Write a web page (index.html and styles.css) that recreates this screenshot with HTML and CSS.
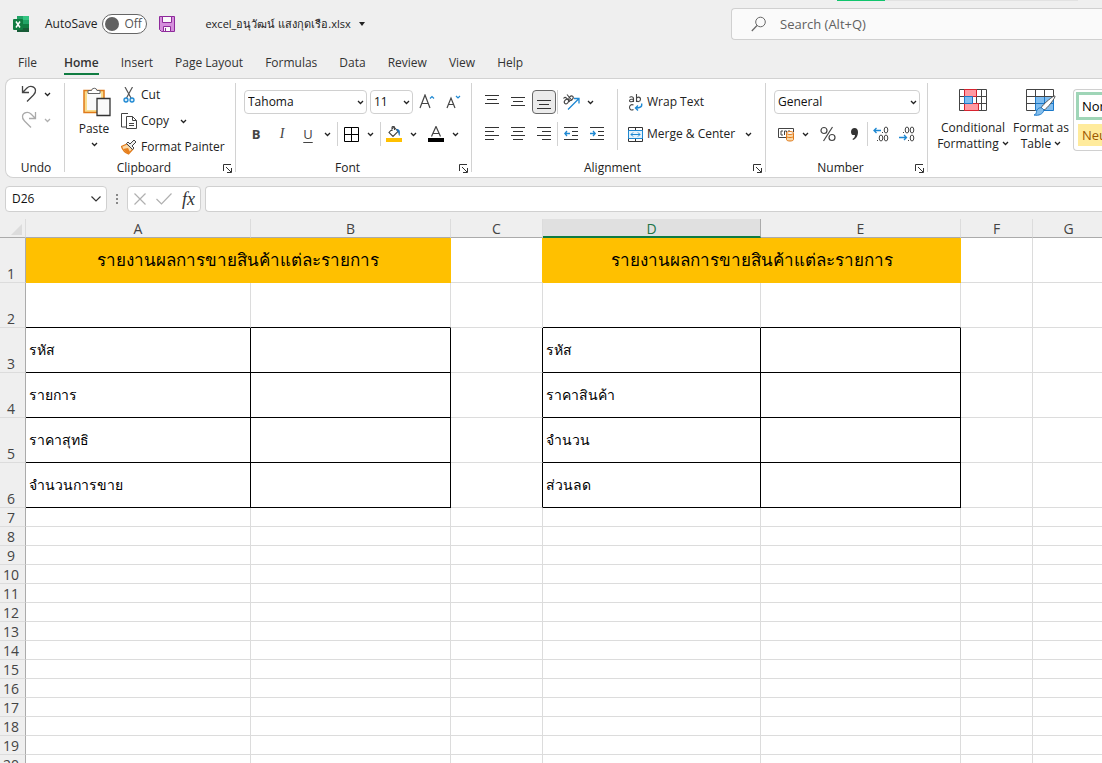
FILE: index.html
```html
<!DOCTYPE html>
<html lang="th">
<head>
    <meta charset="UTF-8">
    <meta name="viewport" content="width=device-width, initial-scale=1.0">
    <title>excel_อนุวัฒน์ แสงกุดเรือ.xlsx</title>
    <link rel="stylesheet" href="styles.css">
</head>
<body>
    <svg class="sprite" aria-hidden="true">
        <symbol id="chev" viewBox="0 0 7 5"><path d="M1 1l2.500 2.500L6 1" fill="none" stroke="currentColor" stroke-width="1.300"/></symbol>
        <symbol id="launch" viewBox="0 0 9 9"><path d="M.5 7V.5H8M3 3l5 5M8.500 4v4.500H4" fill="none" stroke="#333"/></symbol>
    </svg>

    <header class="titlebar">
        <div class="progress"></div>
        <div class="title-left">
            <svg class="logo" width="16" height="16" viewBox="0 0 16 16">
                <path fill="#21a366" d="M4 0h12v4H4z"/><path fill="#33c481" d="M10 0h6v4h-6z"/>
                <path fill="#107c41" d="M4 4h6v4H4z"/><path fill="#21a366" d="M10 4h6v4h-6z"/>
                <path fill="#185c37" d="M4 8h12v8H4z"/><path fill="#107c41" d="M10 8h6v4h-6z"/>
                <rect y="3" width="10" height="11" rx="1" fill="#107c41"/>
                <path d="M3 5.500l4 6M7 5.500l-4 6" stroke="#fff" stroke-width="1.500"/>
            </svg>
            <label class="autosave">AutoSave
                <span class="toggle"><input type="checkbox"><span>Off</span></span>
            </label>
            <button class="save" aria-label="Save">
                <svg width="16" height="16" viewBox="0 0 16 16"><path d="M.5.5h15v15h-13l-2-2z" fill="#d58fdc" stroke="#8e2a9b"/><path d="M3.500.5h9v6h-9zM4.500 15.500v-5h7v5z" fill="#fafafa" stroke="#8e2a9b"/><path d="M6.500 12v3.500" stroke="#8e2a9b"/></svg>
            </button>
            <button class="filename">excel_อนุวัฒน์ แสงกุดเรือ.xlsx
                <svg width="6" height="4" viewBox="0 0 6 4"><path d="M0 0h6L3 4z" fill="#222"/></svg>
            </button>
        </div>
        <label class="search">
            <svg width="16" height="16" viewBox="0 0 16 16"><circle cx="9.500" cy="6" r="4.800" fill="none" stroke="#666"/><path d="M6 9.500L.8 15" stroke="#666" stroke-width="1.200"/></svg>
            <input type="text" placeholder="Search (Alt+Q)" aria-label="Search">
        </label>
    </header>

    <nav class="tabs">
        <a href="#">File</a>
        <a href="#" class="active">Home</a>
        <a href="#">Insert</a>
        <a href="#">Page Layout</a>
        <a href="#">Formulas</a>
        <a href="#">Data</a>
        <a href="#">Review</a>
        <a href="#">View</a>
        <a href="#">Help</a>
    </nav>

    <div class="ribbon">
        <section class="group undo">
            <div class="stack">
                <div class="row short">
                    <button class="tool" aria-label="Undo"><svg width="16" height="18" viewBox="0 0 16 18"><path d="M1.500 1v6.500H8M1.500 7.500L6 3c3-3 8-1.500 8.500 2 .3 2-.5 3.500-2 5L6 16.500" fill="none" stroke="#444" stroke-width="1.300"/></svg></button>
                    <button class="drop" aria-label="Undo list"><svg class="chev"><use href="#chev"/></svg></button>
                </div>
                <div class="row short faded">
                    <button class="tool" aria-label="Redo"><svg width="16" height="18" viewBox="0 0 16 18"><path d="M14.500 1v6.500H8M14.500 7.500L10 3C7 0 2 1.500 1.500 5c-.3 2 .5 3.500 2 5L10 16.500" fill="none" stroke="#aaa" stroke-width="1.300"/></svg></button>
                    <button class="drop" aria-label="Redo list"><svg class="chev"><use href="#chev"/></svg></button>
                </div>
            </div>
            <div class="group-foot"><span>Undo</span></div>
        </section>

        <section class="group clipboard">
            <div class="cols">
                <button class="paste">
                    <svg class="paste-icon" width="28" height="31" viewBox="0 0 28 31"><path d="M1 4.500h20v22H1z" fill="#f9dc8d" stroke="#e07a1a" stroke-width="1.500"/><path d="M4 7h14v17H4z" fill="#fafafa"/><path d="M5 7.500v-3h3.500a2.800 2.800 0 0 1 5.500 0H17v3z" fill="#fff" stroke="#666"/><path d="M14 12.500h13v17H14z" fill="#fafafa" stroke="#333" stroke-width="1.300"/></svg>
                    <span>Paste</span>
                    <svg class="chev"><use href="#chev"/></svg>
                </button>
                <div class="stack">
                    <button class="wide"><svg width="16" height="16" viewBox="0 0 16 16"><path d="M4 0l6 11M11.500 0L5.500 11" stroke="#555" stroke-width="1.200"/><g fill="#d8edfa" stroke="#1e88d2" stroke-width="1.300"><circle cx="5" cy="13" r="2"/><circle cx="11" cy="13" r="2"/></g></svg>Cut</button>
                    <div class="row short">
                        <button class="wide"><svg width="16" height="16" viewBox="0 0 16 16"><path d="M5 14H.500V.500H7" fill="none" stroke="#444"/><path d="M5.500 3.500h6l4 4v8h-10zM11.500 3.500v4h4M8 10.500h5M8 12.500h5" fill="#fff" stroke="#444"/></svg>Copy</button>
                        <button class="drop" aria-label="Copy options"><svg class="chev"><use href="#chev"/></svg></button>
                    </div>
                    <button class="wide"><svg width="16" height="16" viewBox="0 0 16 16"><path d="M6 5L.500 7.500c1 3.500 3.500 6 7 7.500L12 10z" fill="#fbd9a8" stroke="#e07a1a" stroke-width="1.200"/><path d="M2 10l5-1 2 4-2 2z" fill="#e8801e"/><path d="M5.500 4.500l6 6 1.500-1.500-2-2 4-4-2-2-4 4-2-2z" fill="#eee" stroke="#444"/></svg>Format Painter</button>
                </div>
            </div>
            <div class="group-foot"><span>Clipboard</span><button aria-label="Clipboard settings"><svg class="launch"><use href="#launch"/></svg></button></div>
        </section>

        <section class="group font">
            <div class="stack">
                <div class="row fields">
                    <span class="combo name"><select aria-label="Font"><option>Tahoma</option></select><svg class="chev"><use href="#chev"/></svg></span>
                    <span class="combo size"><select aria-label="Font size"><option>11</option></select><svg class="chev"><use href="#chev"/></svg></span>
                    <div class="row">
                        <button class="tool" aria-label="Increase font size"><svg width="16" height="16" viewBox="0 0 16 16"><path d="M1 14L6 1l5 13M3 9.500h6" fill="none" stroke="#444" stroke-width="1.200"/><path d="M11 4.500l2-2 2 2" fill="none" stroke="#1e88d2" stroke-width="1.200"/></svg></button>
                        <button class="tool" aria-label="Decrease font size"><svg width="16" height="16" viewBox="0 0 16 16"><path d="M2 14L6 4l4 10M3.500 10.500h5" fill="none" stroke="#444" stroke-width="1.200"/><path d="M11 2l2 2 2-2" fill="none" stroke="#1e88d2" stroke-width="1.200"/></svg></button>
                    </div>
                </div>
                <div class="row">
                    <button class="tool bold">B</button>
                    <button class="tool italic">I</button>
                    <button class="tool underline">U</button>
                    <button class="drop" aria-label="Underline options"><svg class="chev"><use href="#chev"/></svg></button>
                    <i class="sep"></i>
                    <button class="tool" aria-label="Borders"><svg width="15" height="15" viewBox="0 0 15 15"><path d="M.5.5h14v14H.5zM7.500.5v14M.5 7.500h14" fill="none" stroke="#000"/></svg></button>
                    <button class="drop" aria-label="Border options"><svg class="chev"><use href="#chev"/></svg></button>
                    <i class="sep"></i>
                    <button class="tool" aria-label="Fill colour"><svg width="16" height="16" viewBox="0 0 16 16"><path d="M8 1L3 6.500l4 4 5-5zM6 5V1.500C6 0 8.500 0 8.500 1.500V4" fill="#fff" stroke="#444" stroke-width="1.100"/><path d="M10.500 3c3.500 0 4 2.500 3 7-1.500-1.500-.5-4-2.500-5z" fill="#1e70b8"/><path fill="#ffc000" d="M0 12h16v4H0z"/></svg></button>
                    <button class="drop" aria-label="Fill options"><svg class="chev"><use href="#chev"/></svg></button>
                    <button class="tool" aria-label="Font colour"><svg width="16" height="16" viewBox="0 0 16 16"><path d="M3.500 10.500L8 .5l4.500 10M5 7.500h6" fill="none" stroke="#444" stroke-width="1.200"/><path d="M0 12h16v4H0z"/></svg></button>
                    <button class="drop" aria-label="Font colour options"><svg class="chev"><use href="#chev"/></svg></button>
                </div>
            </div>
            <div class="group-foot"><span>Font</span><button aria-label="Font settings"><svg class="launch"><use href="#launch"/></svg></button></div>
        </section>

        <section class="group align">
            <div class="cols">
                <div class="stack">
                    <div class="row">
                        <button class="tool" aria-label="Top align"><svg width="14" height="14" viewBox="0 0 14 14"><path d="M0 .5h14M2 4.500h10M0 8.500h14" stroke="#333"/></svg></button>
                        <button class="tool" aria-label="Middle align"><svg width="14" height="14" viewBox="0 0 14 14"><path d="M0 2.500h14M2 6.500h10M0 10.500h14" stroke="#333"/></svg></button>
                        <button class="tool pressed" aria-label="Bottom align"><svg width="14" height="14" viewBox="0 0 14 14"><path d="M0 5.500h14M2 9.500h10M0 13.500h14" stroke="#333"/></svg></button>
                        <i class="sep thin"></i>
                        <button class="tool" aria-label="Orientation"><svg width="18" height="16" viewBox="0 0 18 16"><g fill="none" stroke="#444" stroke-width="1.100"><ellipse cx="4.500" cy="7.500" rx="2.500" ry="1.800" transform="rotate(-45 4.500 7.500)"/><path d="M1.500 4.500c1-1.500 2-1.500 3-.3L8 8"/><ellipse cx="9" cy="4.200" rx="2.500" ry="1.800" transform="rotate(-45 9 4.200)"/><path d="M5 .5l5 6"/></g><path d="M6 15.500L16.500 5M12 4.500h5v5" fill="none" stroke="#1e88d2" stroke-width="1.300"/></svg></button>
                        <button class="drop" aria-label="Orientation options"><svg class="chev"><use href="#chev"/></svg></button>
                    </div>
                    <div class="row">
                        <button class="tool" aria-label="Align left"><svg width="14" height="14" viewBox="0 0 14 14"><path d="M0 .5h14M0 4.500h9M0 8.500h14M0 12.500h9" stroke="#333"/></svg></button>
                        <button class="tool" aria-label="Center"><svg width="14" height="14" viewBox="0 0 14 14"><path d="M0 .5h14M2 4.500h10M0 8.500h14M2 12.500h10" stroke="#333"/></svg></button>
                        <button class="tool" aria-label="Align right"><svg width="14" height="14" viewBox="0 0 14 14"><path d="M0 .5h14M5 4.500h9M0 8.500h14M5 12.500h9" stroke="#333"/></svg></button>
                        <i class="sep thin"></i>
                        <button class="tool" aria-label="Decrease indent"><svg width="14" height="14" viewBox="0 0 14 14"><path d="M0 .5h14M8 4.500h6M8 8.500h6M0 12.500h14" stroke="#333"/><path d="M6 6.500H.8M3 4L.8 6.500 3 9" fill="none" stroke="#1e88d2" stroke-width="1.300"/></svg></button>
                        <button class="tool" aria-label="Increase indent"><svg width="14" height="14" viewBox="0 0 14 14"><path d="M0 .5h14M8 4.500h6M8 8.500h6M0 12.500h14" stroke="#333"/><path d="M0 6.500h5.200M3 4l2.200 2.500L3 9" fill="none" stroke="#1e88d2" stroke-width="1.300"/></svg></button>
                    </div>
                </div>
                <div class="stack wrap">
                    <button class="wide"><svg width="15" height="17" viewBox="0 0 15 17"><g fill="none" stroke="#444" stroke-width="1.100"><path d="M1.500 3.500c1-1.200 4-1 4 1V8M5.500 5C3 5 1.500 5.500 1.500 6.800S4.500 8.300 5.500 6.500M8.500 0v8M8.500 5c0-2.500 4-2.500 4 .3S8.500 8.300 8.500 6M5.500 11c-2-1-4 0-4 2.300s2 3.400 4 2.300"/></g><path d="M13.500 9.500c1 3-1 4.500-6 4.500M10 11.500L7.500 14l2.500 2.500" fill="none" stroke="#1e88d2" stroke-width="1.400"/></svg>Wrap Text</button>
                    <div class="row">
                        <button class="wide"><svg width="15" height="15" viewBox="0 0 15 15"><path d="M.5.5h14v14H.5zM7.500.5v3M7.500 11.500v3" fill="none" stroke="#333"/><path d="M.5 3.500h14v8H.5z" fill="#e3f2fb" stroke="#1e88d2"/><path d="M3 7.500h9M5 5.500l-2 2 2 2M10 5.500l2 2-2 2" fill="none" stroke="#1e88d2"/></svg>Merge &amp; Center</button>
                        <button class="drop" aria-label="Merge options"><svg class="chev"><use href="#chev"/></svg></button>
                    </div>
                </div>
            </div>
            <div class="group-foot"><span>Alignment</span><button aria-label="Alignment settings"><svg class="launch"><use href="#launch"/></svg></button></div>
        </section>

        <section class="group number">
            <div class="stack">
                <div class="row fields">
                    <span class="combo format"><select aria-label="Number format"><option>General</option></select><svg class="chev"><use href="#chev"/></svg></span>
                </div>
                <div class="row">
                    <button class="tool" aria-label="Accounting format"><svg width="17" height="15" viewBox="0 0 17 15"><path d="M8 10.500H.5v-9h15V5M5 4H3v4h2M8.500 8V4h-2v4M12 4h-2" fill="none" stroke="#444"/><path d="M8.500 6v6.500c0 2 7 2 7 0V6" fill="#fbd9a8" stroke="#e07a1a"/><ellipse cx="12" cy="6" rx="3.500" ry="1.500" fill="#fff" stroke="#e07a1a"/><path d="M8.500 9.300c0 1.700 7 1.700 7 0" fill="none" stroke="#e07a1a"/></svg></button>
                    <button class="drop" aria-label="Currency options"><svg class="chev"><use href="#chev"/></svg></button>
                    <button class="tool" aria-label="Percent"><svg width="16" height="16" viewBox="0 0 16 16"><g fill="none" stroke="#444" stroke-width="1.200"><circle cx="4" cy="4.500" r="3"/><circle cx="12" cy="11.500" r="3"/><path d="M12.500 1l-9 14"/></g></svg></button>
                    <button class="tool" aria-label="Comma style"><svg width="9" height="14" viewBox="0 0 9 14"><path d="M4.500 1C7 1 8 3 8 5c0 4-2 7-5 8l-.5-1C4 11 5 10 5 8c-3 .5-4-1-4-3.300C1 2.500 2.500 1 4.500 1z" fill="#333"/></svg></button>
                    <i class="sep thin"></i>
                    <button class="tool" aria-label="Increase decimal"><svg width="16" height="16" viewBox="0 0 16 16"><g fill="none" stroke="#444"><ellipse cx="13" cy="4" rx="1.800" ry="3"/><ellipse cx="8" cy="12" rx="1.800" ry="3"/><ellipse cx="13" cy="12" rx="1.800" ry="3"/></g><path d="M9 6h1v1H9zM4 14h1v1H4z" fill="#444"/><path d="M8 4.500H1M3.500 2L1 4.500 3.500 7" fill="none" stroke="#1e88d2" stroke-width="1.300"/></svg></button>
                    <button class="tool" aria-label="Decrease decimal"><svg width="16" height="16" viewBox="0 0 16 16"><g fill="none" stroke="#444"><ellipse cx="8" cy="4" rx="1.800" ry="3"/><ellipse cx="13" cy="4" rx="1.800" ry="3"/><ellipse cx="13" cy="12" rx="1.800" ry="3"/></g><path d="M4 6h1v1H4zM9 14h1v1H9z" fill="#444"/><path d="M0 11.500h7M5 9l2.500 2.500L5 14" fill="none" stroke="#1e88d2" stroke-width="1.300"/></svg></button>
                </div>
            </div>
            <div class="group-foot"><span>Number</span><button aria-label="Number settings"><svg class="launch"><use href="#launch"/></svg></button></div>
        </section>

        <section class="group styles">
            <button class="big">
                <svg width="28" height="27" viewBox="0 0 28 27"><path d="M.5.5h27v21H.5zM.5 7.500h27M.5 14.500h27M5.500.5v21M22.500.5v21M17.500.5v21" fill="#fff" stroke="#444"/><path d="M5.500.5h12v7h-12zM5.500 14.500h14v7h-14z" fill="#ff9aa2" stroke="#d8232f"/><path d="M5.500 7.500h8v7h-8z" fill="#7fbdf0" stroke="#1b78c8"/></svg>
                <span>Conditional<br>Formatting <svg class="chev"><use href="#chev"/></svg></span>
            </button>
            <button class="big">
                <svg width="30" height="27" viewBox="0 0 30 27"><path d="M.5.5h27v21H.5z" fill="#fff"/><path d="M9.500 7.500h18v14h-18z" fill="#7fbdf0"/><path d="M9.500 7.500v14h18v-14M9.500 14.500h18M18.500 7.500v14" fill="none" stroke="#1b78c8"/><path d="M9.500 21.500h-9V.5h27v7M.5 7.500h27M.5 14.500h9M9.500.5v7M18.500.5v7" fill="none" stroke="#444"/><path d="M29 7c1 1-8 13-11 14l-3-2C17 15 28 6 29 7z" fill="#fff" stroke="#555"/><path d="M18 21c-1 4-5 6-10 5 3-1 2-3 3-5s4-3 5.500-1.500z" fill="#83bdeb" stroke="#1b78c8"/></svg>
                <span>Format as<br>Table <svg class="chev"><use href="#chev"/></svg></span>
            </button>
            <div class="gallery">
                <button class="style-normal">Normal</button>
                <button class="style-neutral">Neutral</button>
            </div>
        </section>
    </div>

    <div class="formula-bar">
        <span class="combo namebox"><input type="text" value="D26" aria-label="Name box"><svg width="10" height="6" viewBox="0 0 10 6"><path d="M.5.5L5 5 9.500.5" fill="none" stroke="#333" stroke-width="1.200"/></svg></span>
        <svg class="dots" width="3" height="12" viewBox="0 0 3 12"><path d="M0 1h2v2H0zM0 5h2v2H0zM0 9h2v2H0z" fill="#888"/></svg>
        <div class="fx">
            <button aria-label="Cancel"><svg width="12" height="12" viewBox="0 0 12 12"><path d="M.5.5l11 11M11.500.5l-11 11" stroke="#b0b0b0" stroke-width="1.200"/></svg></button>
            <button aria-label="Enter"><svg width="16" height="12" viewBox="0 0 16 12"><path d="M.5 6l5 5 10-10.500" fill="none" stroke="#b0b0b0" stroke-width="1.200"/></svg></button>
            <button class="fn">fx</button>
        </div>
        <input class="formula" type="text" aria-label="Formula">
    </div>

    <main class="sheet">
        <table>
            <colgroup>
                <col class="c-head"><col class="c-a"><col class="c-b"><col class="c-c"><col class="c-d"><col class="c-b"><col class="c-f"><col>
            </colgroup>
            <thead>
                <tr>
                    <th class="corner"><svg width="11" height="11" viewBox="0 0 11 11"><path d="M11 0v11H0z" fill="#dcdcdc"/></svg></th>
                    <th>A</th><th>B</th><th>C</th><th class="selected">D</th><th>E</th><th>F</th><th>G</th>
                </tr>
            </thead>
            <tbody id="rows">
                <tr class="tall"><th>1</th><td class="heading" colspan="2">รายงานผลการขายสินค้าแต่ละรายการ</td><td class="next-heading"></td><td class="heading" colspan="2">รายงานผลการขายสินค้าแต่ละรายการ</td><td></td><td></td></tr>
                <tr class="tall"><th>2</th><td class="under"></td><td class="under"></td><td></td><td class="under"></td><td class="under"></td><td></td><td></td></tr>
                <tr class="tall"><th>3</th><td class="box">รหัส</td><td class="box"></td><td class="edge"></td><td class="box">รหัส</td><td class="box"></td><td></td><td></td></tr>
                <tr class="tall"><th>4</th><td class="box">รายการ</td><td class="box"></td><td class="edge"></td><td class="box">ราคาสินค้า</td><td class="box"></td><td></td><td></td></tr>
                <tr class="tall"><th>5</th><td class="box">ราคาสุทธิ</td><td class="box"></td><td class="edge"></td><td class="box">จำนวน</td><td class="box"></td><td></td><td></td></tr>
                <tr class="tall"><th>6</th><td class="box">จำนวนการขาย</td><td class="box"></td><td class="edge"></td><td class="box">ส่วนลด</td><td class="box"></td><td></td><td></td></tr>
            </tbody>
        </table>
    </main>

    <script>
        // empty rows below the two boxes
        const rows = document.getElementById('rows');
        for (let i = 7; i <= 20; i++) {
            const tr = document.createElement('tr');
            tr.innerHTML = `<th>${i}</th>` + '<td></td>'.repeat(7);
            rows.appendChild(tr);
        }
    </script>
</body>
</html>
```
FILE: styles.css
```css
* {
    box-sizing: border-box;
}
body {
    margin: 0;
    height: 100vh;
    display: flex;
    flex-direction: column;
    overflow: hidden;
    background: #efefef;
    color: #222;
    font-family: "Open Sans", "Noto Sans", sans-serif;
    font-size: 12px;
    line-height: 16px;
}
button, input, select {
    font: inherit;
    color: inherit;
    border: 0;
    padding: 0;
    margin: 0;
    background: none;
    outline: 0;
}
svg {
    flex: none;
}
.sprite {
    display: none;
}
.chev {
    width: 7px;
    height: 5px;
}
.launch {
    width: 9px;
    height: 9px;
    display: block;
}

/* title bar */
.titlebar {
    position: relative;
    flex: none;
    display: grid;
    grid-template-columns: 731px 1fr;
    height: 48px;
    padding-top: 8px;
}
.progress {
    position: absolute;
    top: 0;
    left: 837px;
    width: 241px;
    height: 1px;
    background: linear-gradient(90deg, #10c46c 48px, #e2e2e2 48px);
}
.title-left {
    display: flex;
    align-items: center;
    height: 31px;
    padding-left: 13px;
}
.autosave {
    display: flex;
    align-items: center;
    gap: 5px;
    margin-left: 16px;
}
.toggle {
    display: flex;
    align-items: center;
    gap: 5px;
    width: 45px;
    height: 20px;
    padding-left: 2px;
    border: 1px solid #666;
    border-radius: 10px;
    background: #fff;
    color: #555;
}
.toggle input {
    appearance: none;
    width: 14px;
    height: 14px;
    border-radius: 50%;
    background: #616161;
}
.save {
    display: flex;
    margin-left: 12px;
}
.filename {
    display: flex;
    align-items: center;
    gap: 8px;
    margin-left: 30px;
    font-size: 11px;
}
.search {
    display: flex;
    align-items: center;
    gap: 13px;
    height: 32px;
    padding-left: 19px;
    border: 1px solid #d0d0d0;
    border-right: 0;
    border-radius: 4px 0 0 4px;
    background: #fafafa;
    font-size: 13px;
}
.search input {
    flex: 1;
    min-width: 0;
}
.search input::placeholder {
    color: #616161;
    opacity: 1;
}

/* tabs */
.tabs {
    flex: none;
    display: flex;
    gap: 22px;
    height: 30px;
    padding: 5px 18px 3px;
}
.tabs a {
    display: flex;
    align-items: center;
    color: #333;
    text-decoration: none;
    border-bottom: 2px solid transparent;
}
.tabs .active {
    margin-left: 5px;
    font-weight: 600;
    border-color: #107c41;
}

/* ribbon */
.ribbon {
    flex: none;
    display: flex;
    height: 100px;
    margin-left: 5px;
    padding: 4px 0 5px;
    border: 1px solid #d2d2d2;
    border-right: 0;
    border-radius: 8px 0 0 8px;
    background: #fff;
}
.group {
    flex: none;
    display: flex;
    flex-direction: column;
    justify-content: space-between;
    border-right: 1px solid #d2d2d2;
}
.undo {
    width: 59px;
    padding-left: 10px;
}
.undo .group-foot {
    margin-left: -8px;
}
.undo .stack {
    margin-top: -2px;
}
.undo .drop {
    width: 10px;
}
.clipboard {
    width: 171px;
}
.font {
    width: 236px;
}
.align {
    width: 294px;
}
.number {
    width: 162px;
}
.group-foot {
    display: flex;
    align-items: center;
    height: 16px;
    margin-bottom: -4px;
}
.group-foot span {
    flex: 1;
    text-align: center;
}
.group-foot button {
    width: 12px;
}
.cols, .row {
    display: flex;
}
.row {
    align-items: center;
    height: 32px;
}
.row.short {
    height: 26px;
}
.tool {
    flex: none;
    display: flex;
    align-items: center;
    justify-content: center;
    width: 26px;
    height: 24px;
    color: #444;
    font-size: 13px;
}
.drop {
    flex: none;
    display: flex;
    justify-content: center;
    width: 12px;
    margin-right: 4px;
}
.faded {
    color: #b0b0b0;
}
.sep {
    width: 1px;
    height: 24px;
    background: #d2d2d2;
}
.bold {
    font-weight: 700;
}
.italic {
    font-family: "Liberation Serif", serif;
    font-size: 14px;
    font-style: italic;
}
.underline {
    text-decoration: underline;
    text-underline-offset: 3px;
}
.pressed {
    width: 24px;
    margin: 0 1px;
    border: 1px solid #666;
    border-radius: 4px;
    background: #ebebeb;
}
.wide {
    display: flex;
    align-items: center;
    gap: 4px;
    height: 26px;
    white-space: nowrap;
}
.paste {
    display: flex;
    flex-direction: column;
    align-items: center;
    width: 56px;
    padding: 3px 0 0 2px;
}
.paste-icon {
    margin-left: 5px;
}
.paste span {
    margin: 4px 0 5px;
}
.clipboard .stack {
    margin-top: -1px;
}
.clipboard .drop {
    margin-left: 8px;
}
.font .stack, .number .stack {
    padding: 3px 0 0 8px;
}
.font .row + .row, .number .row + .row {
    margin-left: -1px;
}
.align .stack {
    padding: 3px 0 0 7px;
}
.fields {
    gap: 3px;
}
.combo {
    display: grid;
    align-items: center;
    height: 24px;
    border: 1px solid #d0d0d0;
    border-radius: 4px;
    background: #fff;
}
.combo > * {
    grid-area: 1 / 1;
}
.combo select, .combo input {
    appearance: none;
    width: 100%;
    padding-left: 3px;
    color: #111;
}
.combo svg {
    justify-self: end;
    margin-right: 2px;
    pointer-events: none;
}
.name {
    width: 123px;
}
.size {
    width: 43px;
}
.format {
    width: 146px;
}
.fields .row {
    margin-left: -2px;
}
.align .wrap {
    display: flex;
    flex-direction: column;
    align-items: flex-start;
    gap: 3px;
    margin: 6px 0 0 7px;
    padding: 0 0 0 10px;
    border-left: 1px solid #d2d2d2;
}
.align .wrap .drop {
    margin-left: 7px;
}
.styles {
    flex: 1 0 auto;
    flex-direction: row;
    justify-content: flex-start;
    align-items: flex-start;
    border: 0;
    padding: 6px 0 0 9px;
}
.big {
    flex: none;
    display: flex;
    flex-direction: column;
    align-items: center;
    gap: 4px;
    width: 72px;
}
.big + .big {
    width: 64px;
}
.big .chev {
    vertical-align: 2px;
}
.gallery {
    flex: 1;
    height: 62px;
    padding: 2px 0 0 2px;
    border: 1px solid #d0d0d0;
    border-right: 0;
    border-radius: 4px 0 0 4px;
    font-size: 13px;
}
.gallery button {
    display: block;
    width: 80px;
    text-align: left;
}
.style-normal {
    height: 28px;
    padding-left: 3px;
    border: 3px solid #9fd5b7;
    color: #000;
}
.gallery .style-normal {
    padding-left: 3px;
    border: 3px solid #9fd5b7;
}
.gallery .style-neutral {
    height: 22px;
    margin: 4px 0 0 2px;
    padding-left: 4px;
    background: #ffeb9c;
    color: #9c5700;
}

/* formula bar */
.formula-bar {
    flex: none;
    display: flex;
    align-items: center;
    height: 41px;
    padding-left: 5px;
}
.formula-bar .combo {
    width: 102px;
    height: 26px;
}
.namebox input {
    padding-left: 6px;
}
.namebox svg {
    margin-right: 5px;
}
.dots {
    margin: 0 8px 0 9px;
}
.fx {
    display: flex;
    align-items: center;
    justify-content: space-between;
    width: 74px;
    height: 26px;
    padding: 0 5px 0 6px;
    border: 1px solid #d0d0d0;
    border-radius: 4px;
    background: #fff;
}
.fx button {
    display: flex;
}
.fx .fn {
    color: #333;
    font-family: "Liberation Serif", serif;
    font-size: 18px;
    font-style: italic;
}
.formula {
    flex: 1;
    height: 26px;
    margin-left: 4px;
    border: 1px solid #d0d0d0;
    border-right: 0;
    border-radius: 4px 0 0 4px;
    background: #fff;
}

/* sheet */
.sheet {
    flex: 1;
    min-height: 0;
    overflow: hidden;
}
table {
    width: 100%;
    min-width: 1105px;
    table-layout: fixed;
    border-collapse: separate;
    border-spacing: 0;
}
.c-head {
    width: 26px;
}
.c-a {
    width: 225px;
}
.c-b {
    width: 200px;
}
.c-c {
    width: 92px;
}
.c-d {
    width: 218px;
}
.c-f {
    width: 72px;
}
th {
    padding: 0;
    color: #444;
    font-size: 14px;
    font-weight: 400;
}
thead th {
    height: 19px;
    padding-top: 2px;
    line-height: 16px;
    border-right: 1px solid #dcdcdc;
    border-bottom: 1px solid #ababab;
}
thead .selected {
    border-right-color: #ababab;
    border-bottom: 2px solid #107c41;
    background: #e0e0e0;
    color: #217346;
    line-height: 15px;
}
.corner svg {
    display: block;
    margin-left: 11px;
}
tbody th {
    height: 19px;
    padding-right: 3px;
    border-right: 1px solid #ababab;
    border-bottom: 1px solid #dcdcdc;
    line-height: 16px;
    vertical-align: bottom;
}
td {
    padding: 0 3px;
    border-right: 1px solid #dcdcdc;
    border-bottom: 1px solid #dcdcdc;
    background: #fff;
    color: #000;
    font-size: 14px;
}
.tall th {
    height: 45px;
}
.heading {
    background: #ffc000;
    border-color: #ffc000;
    font-size: 17px;
    text-align: center;
}
.next-heading {
    border-right-color: #ffc000;
}
.under {
    border-bottom-color: #000;
}
.box {
    border-color: #000;
}
.edge {
    border-right-color: #000;
}
```
